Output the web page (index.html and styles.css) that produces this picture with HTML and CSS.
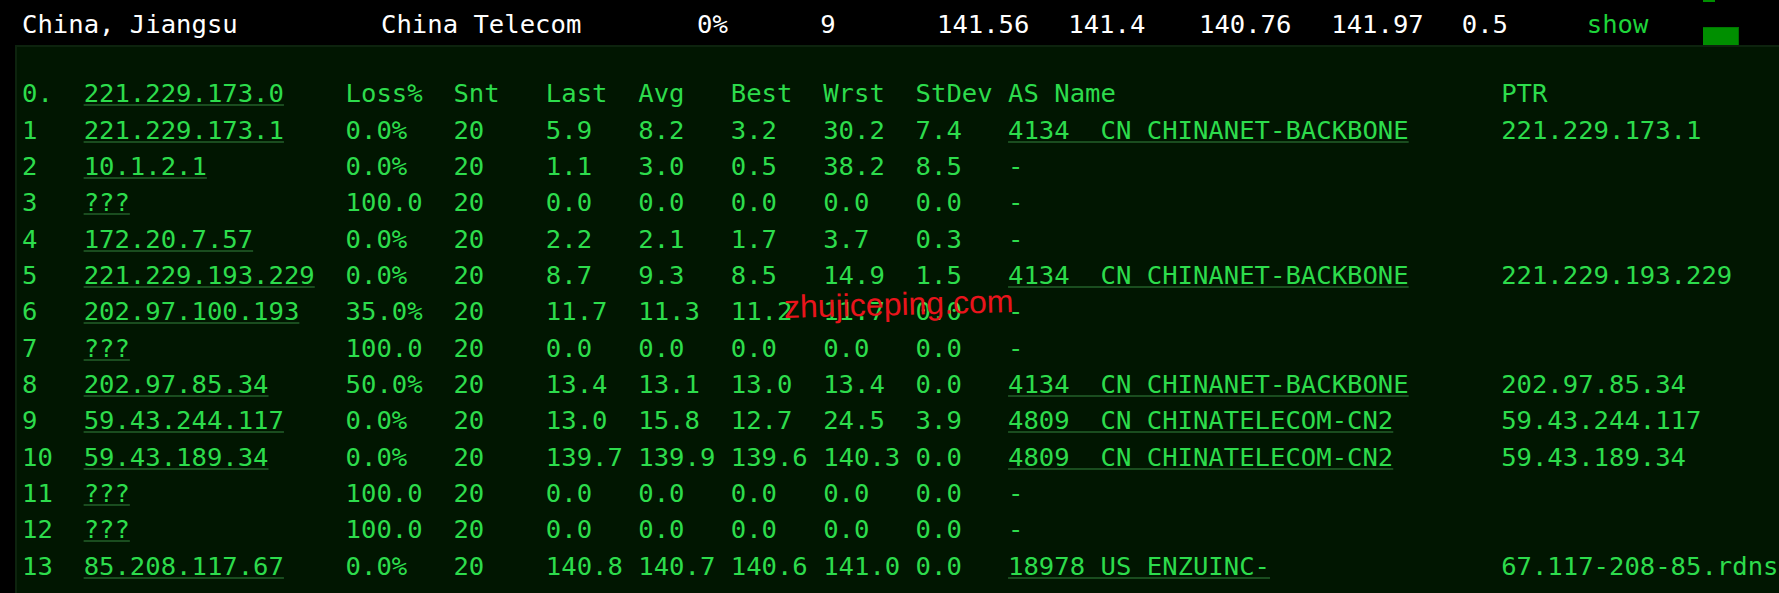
FILE: index.html
```html
<!DOCTYPE html>
<html lang="en">
<head>
<meta charset="utf-8">
<title>MTR result</title>
<link rel="stylesheet" href="styles.css">
</head>
<body>
<div class="page">
  <div class="summary">
    <span class="c-loc">China, Jiangsu</span>
    <span class="c-isp">China Telecom</span>
    <span class="c-loss">0%</span>
    <span class="c-hops">9</span>
    <span class="c-n">141.56</span>
    <span class="c-n">141.4</span>
    <span class="c-n">140.76</span>
    <span class="c-n">141.97</span>
    <span class="c-sd">0.5</span>
    <span class="c-show">show</span>
    <span class="c-bar"><i class="bar bar-prev"></i><i class="bar bar-cur"></i></span>
  </div>

  <div class="panel">
    <div class="trace">
      <div class="row"><span>0.</span><span><a class="lk">221.229.173.0</a></span><span>Loss%</span><span>Snt</span><span>Last</span><span>Avg</span><span>Best</span><span>Wrst</span><span>StDev</span><span>AS Name</span><span>PTR</span></div>
      <div class="row"><span>1</span><span><a class="lk">221.229.173.1</a></span><span>0.0%</span><span>20</span><span>5.9</span><span>8.2</span><span>3.2</span><span>30.2</span><span>7.4</span><span><a class="lk">4134  CN CHINANET-BACKBONE</a></span><span>221.229.173.1</span></div>
      <div class="row"><span>2</span><span><a class="lk">10.1.2.1</a></span><span>0.0%</span><span>20</span><span>1.1</span><span>3.0</span><span>0.5</span><span>38.2</span><span>8.5</span><span>-</span><span></span></div>
      <div class="row"><span>3</span><span><a class="lk">???</a></span><span>100.0</span><span>20</span><span>0.0</span><span>0.0</span><span>0.0</span><span>0.0</span><span>0.0</span><span>-</span><span></span></div>
      <div class="row"><span>4</span><span><a class="lk">172.20.7.57</a></span><span>0.0%</span><span>20</span><span>2.2</span><span>2.1</span><span>1.7</span><span>3.7</span><span>0.3</span><span>-</span><span></span></div>
      <div class="row"><span>5</span><span><a class="lk">221.229.193.229</a></span><span>0.0%</span><span>20</span><span>8.7</span><span>9.3</span><span>8.5</span><span>14.9</span><span>1.5</span><span><a class="lk">4134  CN CHINANET-BACKBONE</a></span><span>221.229.193.229</span></div>
      <div class="row"><span>6</span><span><a class="lk">202.97.100.193</a></span><span>35.0%</span><span>20</span><span>11.7</span><span>11.3</span><span>11.2</span><span>11.7</span><span>0.0</span><span>-</span><span></span></div>
      <div class="row"><span>7</span><span><a class="lk">???</a></span><span>100.0</span><span>20</span><span>0.0</span><span>0.0</span><span>0.0</span><span>0.0</span><span>0.0</span><span>-</span><span></span></div>
      <div class="row"><span>8</span><span><a class="lk">202.97.85.34</a></span><span>50.0%</span><span>20</span><span>13.4</span><span>13.1</span><span>13.0</span><span>13.4</span><span>0.0</span><span><a class="lk">4134  CN CHINANET-BACKBONE</a></span><span>202.97.85.34</span></div>
      <div class="row"><span>9</span><span><a class="lk">59.43.244.117</a></span><span>0.0%</span><span>20</span><span>13.0</span><span>15.8</span><span>12.7</span><span>24.5</span><span>3.9</span><span><a class="lk">4809  CN CHINATELECOM-CN2</a></span><span>59.43.244.117</span></div>
      <div class="row"><span>10</span><span><a class="lk">59.43.189.34</a></span><span>0.0%</span><span>20</span><span>139.7</span><span>139.9</span><span>139.6</span><span>140.3</span><span>0.0</span><span><a class="lk">4809  CN CHINATELECOM-CN2</a></span><span>59.43.189.34</span></div>
      <div class="row"><span>11</span><span><a class="lk">???</a></span><span>100.0</span><span>20</span><span>0.0</span><span>0.0</span><span>0.0</span><span>0.0</span><span>0.0</span><span>-</span><span></span></div>
      <div class="row"><span>12</span><span><a class="lk">???</a></span><span>100.0</span><span>20</span><span>0.0</span><span>0.0</span><span>0.0</span><span>0.0</span><span>0.0</span><span>-</span><span></span></div>
      <div class="row"><span>13</span><span><a class="lk">85.208.117.67</a></span><span>0.0%</span><span>20</span><span>140.8</span><span>140.7</span><span>140.6</span><span>141.0</span><span>0.0</span><span><a class="lk">18978 US ENZUINC-</a></span><span>67.117-208-85.rdns</span></div>
    </div>
    <div class="watermark">zhujiceping.com</div>
  </div>
</div>
</body>
</html>
```

FILE: styles.css
```css
html, body {
  margin: 0;
  padding: 0;
  background: #000;
}

body {
  width: 1779px;
  height: 593px;
  overflow: hidden;
  font-family: "DejaVu Sans Mono", "Liberation Mono", monospace;
  font-size: 25.6px;
}

.page {
  display: flex;
  flex-direction: column;
  width: 1779px;
  height: 593px;
  overflow: hidden;
}

/* top summary line */
.summary {
  box-sizing: border-box;
  height: 45px;
  padding-left: 22px;
  display: grid;
  grid-template-columns: 359px 316px 123.3px 116.7px 131.3px 130.7px 132.3px 130.5px 125px 116px 37px;
  color: #ffffff;
  line-height: 36px;
  white-space: pre;
}

.summary > span {
  padding-top: 6.4px;
}

.summary .c-show {
  color: #1ed43a;
}

.summary .c-bar {
  padding-top: 0;
  display: flex;
  flex-direction: column;
  justify-content: space-between;
  height: 45px;
}

.bar {
  display: block;
  background: #008f00;
}

.bar-prev {
  width: 12px;
  height: 2px;
}

.bar-cur {
  box-sizing: border-box;
  width: 36.5px;
  height: 18.5px;
  border-right: 1px solid #006e00;
  border-top: 1px solid #007800;
}

/* trace panel */
.panel {
  position: relative;
  flex: 1;
  margin-left: 15px;
  background: #011601;
  border-top: 2px solid #0d230e;
  border-left: 2px solid #0d230e;
  padding: 28.3px 0 0 5px;
  color: #2ddc4c;
  overflow: hidden;
}

.trace {
  display: flex;
  flex-direction: column;
}

.row {
  display: grid;
  grid-template-columns: 4ch 17ch 7ch 6ch 6ch 6ch 6ch 6ch 6ch 32ch 30ch;
  line-height: 36.33px;
  white-space: pre;
}

.lk {
  color: inherit;
  text-decoration: underline;
  text-decoration-color: #1a4d1f;
  text-decoration-thickness: 2px;
  text-underline-offset: 2px;
}

.watermark {
  position: absolute;
  left: 767px;
  top: 241px;
  font-family: "Liberation Sans", Arial, sans-serif;
  font-size: 32px;
  line-height: 32px;
  color: #e9141c;
  transform: rotate(-1.5deg);
  white-space: nowrap;
}
```
